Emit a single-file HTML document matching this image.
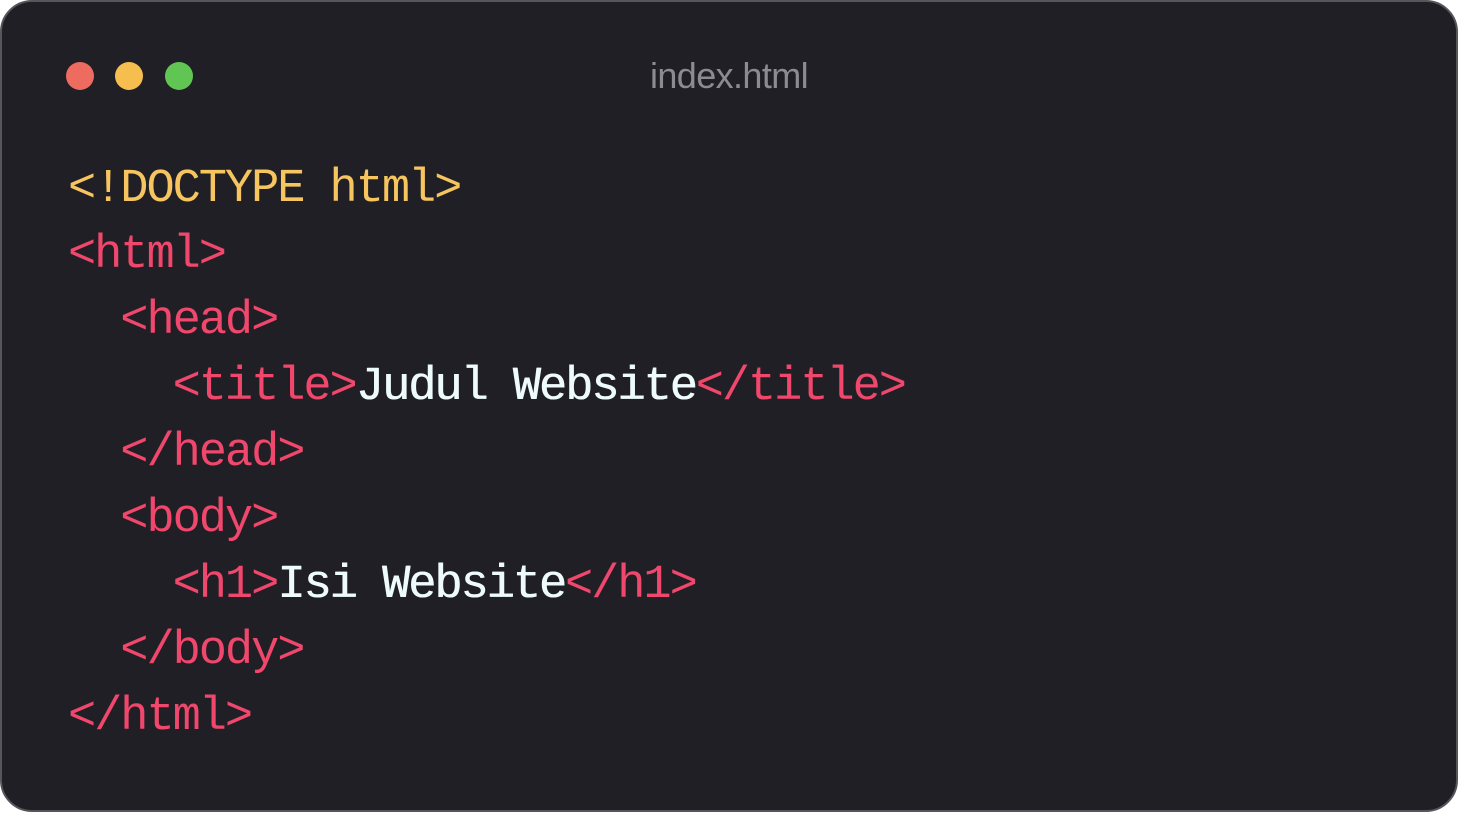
<!DOCTYPE html>
<html><head><style>
html,body{margin:0;padding:0;background:#fff;width:1458px;height:813px;overflow:hidden}
.win{position:absolute;left:0;top:0;width:1454px;height:808px;background:#211f26;border:2px solid #56555a;border-radius:32px}
.dot{position:absolute;top:60px;width:28px;height:28px;border-radius:50%}
.title{position:absolute;left:0;width:1458px;top:55px;text-align:center;font:36px "Liberation Sans",sans-serif;color:#8c8b90;letter-spacing:-0.6px}
.code{position:absolute;left:68px;top:157px;font-family:"Liberation Mono",monospace;font-size:47px;letter-spacing:-2.05px;line-height:66px;white-space:pre;color:#f0476c}
.y{color:#f7c55f}.w{color:#eefbfc;text-shadow:0.6px 0 0 #eefbfc}
</style></head><body>
<div class="win">
<div class="dot" style="left:64px;background:#ee6b60"></div>
<div class="dot" style="left:113px;background:#f5be4f"></div>
<div class="dot" style="left:163px;background:#61c554"></div>
</div>
<div class="title">index.html</div>
<div class="code"><span class="y">&lt;!DOCTYPE html&gt;</span>
&lt;html&gt;
  &lt;head&gt;
    &lt;title&gt;<span class="w">Judul Website</span>&lt;/title&gt;
  &lt;/head&gt;
  &lt;body&gt;
    &lt;h1&gt;<span class="w">Isi Website</span>&lt;/h1&gt;
  &lt;/body&gt;
&lt;/html&gt;</div>
</body></html>
